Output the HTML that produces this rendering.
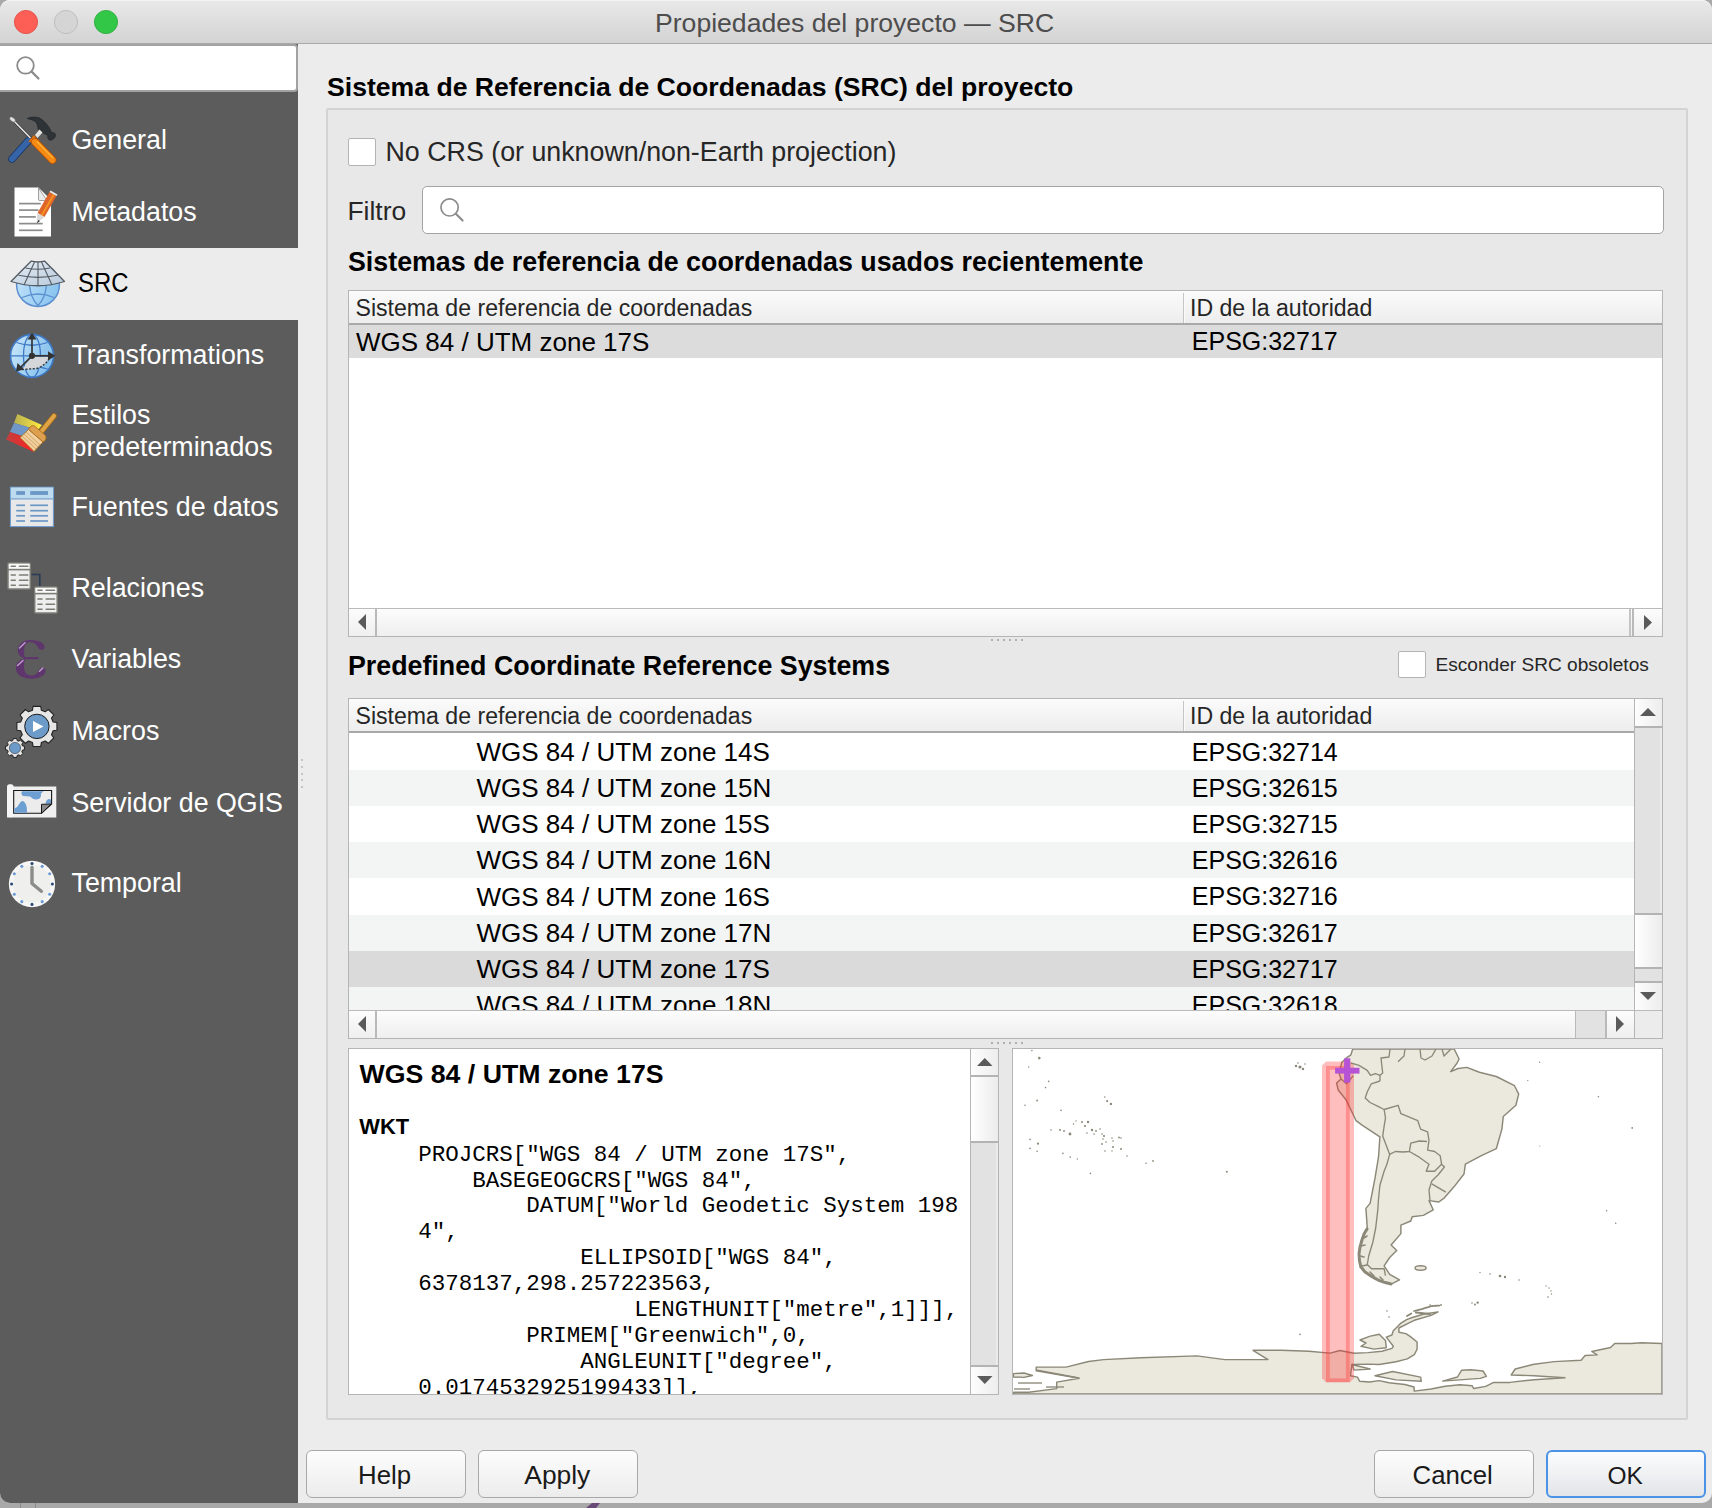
<!DOCTYPE html>
<html><head><meta charset="utf-8">
<style>
html,body{margin:0;padding:0;}
body{width:1712px;height:1508px;position:relative;overflow:hidden;background:#a9a9a9;font-family:'Liberation Sans', sans-serif;}
.t{position:absolute;white-space:pre;}
svg{position:absolute;overflow:visible;}
</style></head><body>
<div style="position:absolute;left:0px;top:0px;width:1712px;height:1503px;background:#ececec;border-radius:10px 10px 10px 10px;overflow:hidden;"></div>
<div style="position:absolute;left:20px;top:1503px;width:1px;height:5px;background:#8a8a8a;"></div>
<div style="position:absolute;left:35px;top:1503px;width:1px;height:5px;background:#8a8a8a;"></div>
<svg style="left:0;top:0" width="1712" height="1508"><path d="M586,1508 L592,1503 L600,1503 L596,1508 Z" fill="#6a4a78"/></svg>
<div style="position:absolute;left:0px;top:44px;width:298px;height:1459px;background:#5c5c5c;border-radius:0 0 0 10px;"></div>
<div style="position:absolute;left:0px;top:0px;width:1712px;height:44px;background:linear-gradient(#e9e9e9,#d3d3d3);border-radius:10px 10px 0 0;box-shadow:inset 0 1px 0 #f4f4f4;"></div>
<div style="position:absolute;left:0px;top:43px;width:1712px;height:1px;background:#a9a9a9;"></div>
<svg style="left:0;top:0" width="140" height="44"><circle cx="26" cy="22" r="11.6" fill="#fd5f57" stroke="#e2463f" stroke-width="0.8"/><circle cx="66" cy="22" r="11.6" fill="#d5d5d5" stroke="#b8b8b8" stroke-width="0.8"/><circle cx="106" cy="22" r="11.6" fill="#33c748" stroke="#27a83a" stroke-width="0.8"/></svg>
<div class="t" style="left:655.0px;top:9.7px;font-size:26.6px;line-height:26.6px;color:#4d4d4d;font-weight:normal;font-family:'Liberation Sans', sans-serif;">Propiedades del proyecto — SRC</div>
<div style="position:absolute;left:-4px;top:44px;width:302px;height:48px;background:#fff;border:2px solid #a2a2a2;border-top-width:2.4px;box-sizing:border-box;border-radius:4px;"></div>
<svg style="left:0;top:45" width="60" height="46"><circle cx="25.5" cy="20.4" r="8.3" fill="none" stroke="#8b8b8b" stroke-width="1.8"/><line x1="31.6" y1="26.6" x2="38.5" y2="33.5" stroke="#8b8b8b" stroke-width="2.2" stroke-linecap="round"/></svg>
<div style="position:absolute;left:0px;top:248px;width:298px;height:72px;background:#ececec;"></div>
<div class="t" style="left:71.5px;top:126.8px;font-size:26.8px;line-height:26.8px;color:#ffffff;font-weight:normal;font-family:'Liberation Sans', sans-serif;">General</div>
<div class="t" style="left:71.5px;top:198.8px;font-size:26.8px;line-height:26.8px;color:#ffffff;font-weight:normal;font-family:'Liberation Sans', sans-serif;">Metadatos</div>
<div class="t" style="left:71.5px;top:342.1px;font-size:26.8px;line-height:26.8px;color:#ffffff;font-weight:normal;font-family:'Liberation Sans', sans-serif;">Transformations</div>
<div class="t" style="left:71.5px;top:402.2px;font-size:26.8px;line-height:26.8px;color:#ffffff;font-weight:normal;font-family:'Liberation Sans', sans-serif;">Estilos</div>
<div class="t" style="left:71.5px;top:434.2px;font-size:26.8px;line-height:26.8px;color:#ffffff;font-weight:normal;font-family:'Liberation Sans', sans-serif;">predeterminados</div>
<div class="t" style="left:71.5px;top:493.8px;font-size:26.8px;line-height:26.8px;color:#ffffff;font-weight:normal;font-family:'Liberation Sans', sans-serif;">Fuentes de datos</div>
<div class="t" style="left:71.5px;top:574.5px;font-size:26.8px;line-height:26.8px;color:#ffffff;font-weight:normal;font-family:'Liberation Sans', sans-serif;">Relaciones</div>
<div class="t" style="left:71.5px;top:646.0px;font-size:26.8px;line-height:26.8px;color:#ffffff;font-weight:normal;font-family:'Liberation Sans', sans-serif;">Variables</div>
<div class="t" style="left:71.5px;top:718.1px;font-size:26.8px;line-height:26.8px;color:#ffffff;font-weight:normal;font-family:'Liberation Sans', sans-serif;">Macros</div>
<div class="t" style="left:71.5px;top:790.1px;font-size:26.8px;line-height:26.8px;color:#ffffff;font-weight:normal;font-family:'Liberation Sans', sans-serif;">Servidor de QGIS</div>
<div class="t" style="left:71.5px;top:870.4px;font-size:26.8px;line-height:26.8px;color:#ffffff;font-weight:normal;font-family:'Liberation Sans', sans-serif;">Temporal</div>
<div class="t" style="left:78.0px;top:269.9px;font-size:26.8px;line-height:26.8px;color:#000000;font-weight:normal;font-family:'Liberation Sans', sans-serif;transform:scaleX(0.89);transform-origin:0 0;">SRC</div>
<svg style="left:0px;top:108px" width="64" height="64" viewBox="0 0 64 64">
<defs><linearGradient id="gBlue" x1="0" y1="0" x2="1" y2="1"><stop offset="0" stop-color="#7aa0d0"/><stop offset="1" stop-color="#1f4a85"/></linearGradient>
<linearGradient id="gOr" x1="0" y1="0" x2="1" y2="0"><stop offset="0" stop-color="#e56a00"/><stop offset="0.5" stop-color="#ffb030"/><stop offset="1" stop-color="#e06000"/></linearGradient></defs>
<path d="M27.2,10.4 C30,9.3 32,9 34,9.1 C37,9.2 39,9.6 40.3,10.6 C42,11.5 43.5,12.8 44.6,14 C46.5,15.8 47.8,17.5 48.8,19.1 C50,21 50.8,23 51.4,24.2 C52.5,24.6 53.5,24.7 54.3,25 C55.3,25.6 55.8,26.4 55.6,27.2 C55.4,28.8 54.8,29.8 53.9,30.6 C52.6,31.8 51.2,32.3 50.1,32.3 C49,32 48.2,31.4 48,30.6 C47.8,29.5 47.6,28.2 47.5,27.2 C45.5,26.2 43.6,25.5 42,24.6 C40.2,23.5 38.9,22.4 38.2,21.2 C37.8,19.8 37.6,18.3 37.4,17 C36.7,15.4 35.8,14 34.8,13.2 C33,12.2 31.3,11.7 29.7,11.2 C28.8,10.9 27.9,10.7 27.2,10.4 Z" fill="#2e3337" stroke="#1e2225" stroke-width="0.6"/>
<path d="M35,27 L39.5,21.5 L42.5,24.5 L37.5,30 Z" fill="#e6e6e0"/>
<line x1="29" y1="32" x2="12" y2="51" stroke="#1a3560" stroke-width="7.6" stroke-linecap="round"/>
<line x1="29" y1="32" x2="12" y2="51" stroke="#3565a8" stroke-width="6" stroke-linecap="round"/>
<line x1="12" y1="11" x2="30.5" y2="30" stroke="#333" stroke-width="2.6"/>
<line x1="12" y1="11" x2="30.5" y2="30" stroke="#e8e8e8" stroke-width="1.6"/>
<ellipse cx="12.5" cy="11.5" rx="3.5" ry="2" transform="rotate(40 12.5 11.5)" fill="#e0e0e0" stroke="#444" stroke-width="0.5"/>
<path d="M28.5,33.5 L34,27.3 L36.5,30.5 L39.5,32.5 L36,37 L33,34.8 Z" fill="#f07a0a" stroke="#b85000" stroke-width="0.5"/>
<line x1="35" y1="34" x2="52.5" y2="52" stroke="#b85000" stroke-width="7.8" stroke-linecap="round"/>
<line x1="35" y1="34" x2="52.5" y2="52" stroke="#f58a14" stroke-width="6.2" stroke-linecap="round"/>
<line x1="37" y1="33.5" x2="53" y2="50" stroke="#ffc040" stroke-width="1.2" opacity="0.8"/>
</svg>
<svg style="left:0px;top:180px" width="64" height="64" viewBox="0 0 64 64">
<path d="M14.5,7.5 L38.5,7.5 L51,20 L51,56.5 L14.5,56.5 Z" fill="#ffffff"/>
<path d="M38.5,8 L38.5,19.5 Q38.5,20.5 39.5,20.5 L47,20.5 Z" fill="#eaeaea" stroke="#666" stroke-width="0.6"/>
<g stroke="#8c8c8c" stroke-width="1.7"><line x1="19" y1="23.6" x2="40.8" y2="23.6"/><line x1="19" y1="30.1" x2="38.5" y2="30.1"/><line x1="19" y1="36.9" x2="35.8" y2="36.9"/><line x1="19" y1="43.6" x2="42.7" y2="43.6"/><line x1="19" y1="50.3" x2="42.7" y2="50.3"/></g>
<path d="M49.5,12 L56.5,16 L44.5,37 L37.5,33 Z" fill="#e0652a"/>
<path d="M53,14 L54.7,15 L42.5,36 L40.8,35 Z" fill="#f39420"/>
<path d="M49.5,12 L56.5,16 L57.5,14.5 L50.5,10.5 Z" fill="#e8e8e8"/>
<path d="M37.5,33 L44.5,37 L36.5,43.5 Z" fill="#d8d8d8"/>
<path d="M38.5,40 L40,41 L36.5,43.5 Z" fill="#333"/>
</svg>
<svg style="left:0px;top:252px" width="72" height="64" viewBox="0 0 72 64">
<defs><linearGradient id="gGl" x1="0" y1="0" x2="1" y2="0.3"><stop offset="0" stop-color="#c4e4fb"/><stop offset="1" stop-color="#8cc6f0"/></linearGradient>
<linearGradient id="gFan" x1="0" y1="0" x2="1" y2="1"><stop offset="0" stop-color="#e4ecf4"/><stop offset="1" stop-color="#b8cadc"/></linearGradient></defs>
<circle cx="38" cy="33" r="21.4" fill="url(#gGl)" stroke="#5b8fd0" stroke-width="1.5"/>
<path d="M29.5,33 Q30.5,46 38,53.5 Q45.5,46 46.5,33" fill="none" stroke="#5b8fd0" stroke-width="1.3"/>
<path d="M22,45.5 Q38,38.5 54,45.5" fill="none" stroke="#5b8fd0" stroke-width="1.3"/>
<path d="M31,9.2 Q38,10.8 44.8,9.2 L64.5,29.5 Q38,38 11,29.5 Z" fill="url(#gFan)" stroke="#555b62" stroke-width="1.3" stroke-linejoin="round"/>
<g fill="none" stroke="#555b62" stroke-width="1.1">
<path d="M25.5,16 Q38,18.5 50,16"/><path d="M18.5,23.2 Q38,27.5 57.5,23.2"/>
<path d="M34.5,10 L24,33"/><path d="M41.5,10 L52,33"/><path d="M38,10.3 L38,34"/>
</g>
</svg>
<svg style="left:0px;top:324px" width="64" height="64" viewBox="0 0 64 64">
<defs><linearGradient id="gGl2" x1="0" y1="0" x2="1" y2="0.4"><stop offset="0" stop-color="#cde9fb"/><stop offset="1" stop-color="#84c0ec"/></linearGradient></defs>
<circle cx="32" cy="31.8" r="21.5" fill="url(#gGl2)" stroke="#3f78c4" stroke-width="1.7"/>
<g fill="none" stroke="#3f78c4" stroke-width="1.3">
<line x1="10.5" y1="31.8" x2="53.5" y2="31.8"/>
<ellipse cx="32" cy="31.8" rx="8.5" ry="21.5"/>
<path d="M16.5,18.5 Q32,24 47.5,18.5"/><path d="M16.5,45 Q32,39.5 47.5,45"/>
</g>
<path d="M32,33 L49.5,33 Q45,42 37,44.5 L22,45.5 Z" fill="#d4d6da"/>
<path d="M22,45.5 L37,44.5 Q46,41 49.5,34" fill="none" stroke="#333" stroke-width="1.4" stroke-dasharray="2,1.6"/>
<g stroke="#333" stroke-width="1.7" fill="#333">
<line x1="32" y1="31.8" x2="32" y2="12"/><line x1="32" y1="31.8" x2="52" y2="31.8"/><line x1="32" y1="31.8" x2="19" y2="45"/>
</g>
<g fill="#333">
<path d="M32,8.8 L27.5,15.5 L36.5,15.5 Z"/><path d="M55.3,31.8 L48,27.2 L48,36.4 Z"/><path d="M16,47.5 L17.5,39 L24,45.5 Z"/>
<circle cx="32" cy="31.8" r="3.1"/>
</g>
</svg>
<svg style="left:0px;top:400px" width="64" height="64" viewBox="0 0 64 64">
<defs><linearGradient id="gY" x1="0" y1="0" x2="1" y2="0"><stop offset="0" stop-color="#b8b050"/><stop offset="1" stop-color="#ffec40"/></linearGradient>
<linearGradient id="gR" x1="0" y1="0" x2="1" y2="0"><stop offset="0" stop-color="#c04040"/><stop offset="1" stop-color="#ff2020"/></linearGradient></defs>
<path d="M17.4,14 L42,25 L38,30 L14,23 Z" fill="url(#gY)"/>
<path d="M14,23 L38,30 L28,38 L10,32 Z" fill="#6f98c8"/>
<path d="M10,32 L28,38 L34,52 L6,39.5 Z" fill="url(#gR)"/>
<line x1="41" y1="32" x2="54" y2="16" stroke="#a86a10" stroke-width="5.6" stroke-linecap="round"/>
<line x1="41" y1="32" x2="54" y2="16" stroke="#e0a448" stroke-width="4.1" stroke-linecap="round"/>
<path d="M30,27 Q32,24.5 34.5,26 L45.5,35.5 Q47,38 45,40.5 L43,42 L28.5,29.5 Z" fill="#dca050" stroke="#a86a10" stroke-width="0.8"/>
<path d="M20,37.5 L28.5,29.5 L43,42 L34,51.5 Z" fill="#f0d0a0" stroke="#a86a10" stroke-width="0.8"/>
<g stroke="#c89048" stroke-width="0.7"><line x1="22" y1="36" x2="36" y2="49"/><line x1="24" y1="34" x2="38" y2="47"/><line x1="26" y1="32" x2="40" y2="45"/></g>
</svg>
<svg style="left:0px;top:476px" width="64" height="64" viewBox="0 0 64 64">
<rect x="10.4" y="11.2" width="43" height="39.4" fill="#e8e8e8" stroke="#6d9bd2" stroke-width="1"/>
<rect x="10.9" y="11.7" width="42" height="11" fill="#bddcf0"/>
<line x1="10.4" y1="22.9" x2="53.4" y2="22.9" stroke="#7aa4d0" stroke-width="1.3"/>
<g fill="#6b97c6"><rect x="16.2" y="15.1" width="8.8" height="3.8"/><rect x="30.2" y="15.1" width="17.8" height="3.8"/></g>
<g stroke="#6b97c6" stroke-width="1.7"><line x1="16.2" y1="29.3" x2="25" y2="29.3"/><line x1="30.2" y1="29.3" x2="48" y2="29.3"/>
<line x1="16.2" y1="34.7" x2="25" y2="34.7"/><line x1="30.2" y1="34.7" x2="48" y2="34.7"/>
<line x1="16.2" y1="39.8" x2="25" y2="39.8"/><line x1="30.2" y1="39.8" x2="48" y2="39.8"/>
<line x1="16.2" y1="45" x2="25" y2="45"/><line x1="30.2" y1="45" x2="48" y2="45"/></g>
</svg>
<svg style="left:0px;top:556px" width="64" height="64" viewBox="0 0 64 64"><rect x="8" y="7" width="22.3" height="26" rx="1" fill="#eeeeee" stroke="#7d7d75" stroke-width="1.5"/><rect x="8.8" y="7.8" width="20.7" height="5.2" fill="#fafafa"/><line x1="8" y1="13.6" x2="30.3" y2="13.6" stroke="#7d7d75" stroke-width="1.6"/><g stroke="#7d7d75" stroke-width="1.6" stroke-linecap="round"><line x1="11.3" y1="10.2" x2="15.3" y2="10.2"/><line x1="19.5" y1="10.2" x2="27.8" y2="10.2"/><line x1="11.3" y1="19" x2="15.3" y2="19"/><line x1="19.5" y1="19" x2="27.8" y2="19"/><line x1="11.3" y1="24.2" x2="15.3" y2="24.2"/><line x1="19.5" y1="24.2" x2="27.8" y2="24.2"/><line x1="11.3" y1="29.3" x2="15.3" y2="29.3"/><line x1="19.5" y1="29.3" x2="27.8" y2="29.3"/></g><rect x="34.7" y="31" width="22.5" height="26" rx="1" fill="#eeeeee" stroke="#7d7d75" stroke-width="1.5"/><rect x="35.5" y="31.8" width="20.9" height="5.2" fill="#fafafa"/><line x1="34.7" y1="37.6" x2="57.2" y2="37.6" stroke="#7d7d75" stroke-width="1.6"/><g stroke="#7d7d75" stroke-width="1.6" stroke-linecap="round"><line x1="38.0" y1="34.2" x2="42.0" y2="34.2"/><line x1="46.2" y1="34.2" x2="54.5" y2="34.2"/><line x1="38.0" y1="43" x2="42.0" y2="43"/><line x1="46.2" y1="43" x2="54.5" y2="43"/><line x1="38.0" y1="48.2" x2="42.0" y2="48.2"/><line x1="46.2" y1="48.2" x2="54.5" y2="48.2"/><line x1="38.0" y1="53.3" x2="42.0" y2="53.3"/><line x1="46.2" y1="53.3" x2="54.5" y2="53.3"/></g><path d="M31.5,18.5 L39.8,18.5 L39.8,30" fill="none" stroke="#263b56" stroke-width="1.6"/></svg>
<svg style="left:0px;top:628px" width="64" height="64" viewBox="0 0 64 64">
<g fill="#5f356d">
<path d="M44.5,19 C44.5,16 41,12 31,12 C22,12 17.8,17 17.8,22.5 C17.8,26.5 20.5,29 24,30 L25,29.3 C23.5,27.5 24.3,24 24.3,21 C24.3,17 27,14.3 30.5,14.3 C34,14.3 36,16 37.5,18.5 C38.5,20.5 39.5,21.8 41.5,21.8 C43.3,21.8 44.5,20.5 44.5,19 Z"/>
<path d="M24,29.1 L38,29 Q39.8,30 38,31.2 L24,31.3 Z"/>
<path d="M24.5,30.5 C19.5,31.5 15.8,35 15.8,40 C15.8,46.5 22,50.7 32,50.7 C39.5,50.7 45.5,47 45.5,43 C45.5,41 44,39.5 42.5,39.5 C40.5,39.5 39.5,41 38.5,43 C37,46 34.5,47.5 31.5,47.5 C26.5,47.5 24,43.5 24,39.5 C24,35.5 24.5,33 25,31.5 Z"/>
</g>
<g stroke="#c8a8d8" stroke-width="1.5" stroke-linecap="round" opacity="0.9"><line x1="19.5" y1="20" x2="25" y2="14.8"/><line x1="17.5" y1="37.5" x2="23" y2="32.5"/><line x1="39.5" y1="43.3" x2="42.8" y2="40"/></g>
</svg>
<svg style="left:0px;top:700px" width="64" height="64" viewBox="0 0 64 64">
<path d="M32.48,10.19 L33.05,6.37 L40.75,6.37 L41.32,10.19 L45.24,11.82 L48.34,9.51 L53.79,14.96 L51.48,18.06 L53.11,21.98 L56.93,22.55 L56.93,30.25 L53.11,30.82 L51.48,34.74 L53.79,37.84 L48.34,43.29 L45.24,40.98 L41.32,42.61 L40.75,46.43 L33.05,46.43 L32.48,42.61 L28.56,40.98 L25.46,43.29 L20.01,37.84 L22.32,34.74 L20.69,30.82 L16.87,30.25 L16.87,22.55 L20.69,21.98 L22.32,18.06 L20.01,14.96 L25.46,9.51 L28.56,11.82 Z" fill="#e6e6e6" stroke="#222" stroke-width="1.1" stroke-linejoin="round"/>
<circle cx="36.9" cy="26.4" r="12.2" fill="#6c9bc9" stroke="#1a1a1a" stroke-width="1"/>
<path d="M33,21 L43.5,26.5 L33,32 Z" fill="#fff"/>
<path d="M12.95,40.47 L13.19,38.57 L16.81,38.57 L17.05,40.47 L18.87,41.23 L20.38,40.05 L22.95,42.62 L21.77,44.13 L22.53,45.95 L24.43,46.19 L24.43,49.81 L22.53,50.05 L21.77,51.87 L22.95,53.38 L20.38,55.95 L18.87,54.77 L17.05,55.53 L16.81,57.43 L13.19,57.43 L12.95,55.53 L11.13,54.77 L9.62,55.95 L7.05,53.38 L8.23,51.87 L7.47,50.05 L5.57,49.81 L5.57,46.19 L7.47,45.95 L8.23,44.13 L7.05,42.62 L9.62,40.05 L11.13,41.23 Z" fill="#e6e6e6" stroke="#222" stroke-width="1" stroke-linejoin="round"/>
<circle cx="15" cy="48" r="5.6" fill="#6c9bc9" stroke="#333" stroke-width="0.6"/>
</svg>
<svg style="left:0px;top:772px" width="64" height="64" viewBox="0 0 64 64">
<rect x="7" y="14.5" width="49.3" height="31" fill="#efefef"/>
<rect x="7" y="12.2" width="6.6" height="33" rx="2.5" fill="#f4f4f4"/>
<path d="M13.7,18.5 L51.6,18.5 L51.6,32 L41.5,41.3 L13.7,41.3 Z" fill="#ececec" stroke="#151515" stroke-width="1.1"/>
<g fill="#6e9fd3">
<path d="M22,19.2 L44,19.2 Q40,21 41,24 Q40,27.5 36,27.5 Q32,27 30,24.5 Q26,24 23,24 Q20.5,22 22,19.2 Z"/>
<path d="M14.3,36.5 Q18,35 19.5,31.5 Q21,28.5 23,29 Q26,30.5 26.8,36 L27,40.7 L14.3,40.7 Z"/>
<path d="M45.5,31.5 Q46,27.5 49,27 L51,27.5 L51,31.5 Z"/>
</g>
<path d="M41.5,32.3 L51.2,32 L41.5,41.3 Z" fill="#8a8a8a" stroke="#151515" stroke-width="1"/>
</svg>
<svg style="left:0px;top:852px" width="64" height="64" viewBox="0 0 64 64"><circle cx="32" cy="32" r="23.5" fill="#3e3e3e" opacity="0.35"/><circle cx="32" cy="32" r="23.2" fill="#f6f6f5"/><circle cx="32" cy="32" r="19" fill="#efefed"/><circle cx="32.00" cy="11.60" r="1.55" fill="#2b4b78"/><circle cx="42.20" cy="14.33" r="1.55" fill="#6b9bd2"/><circle cx="49.67" cy="21.80" r="1.55" fill="#6b9bd2"/><circle cx="52.40" cy="32.00" r="1.55" fill="#2b4b78"/><circle cx="49.67" cy="42.20" r="1.55" fill="#6b9bd2"/><circle cx="42.20" cy="49.67" r="1.55" fill="#6b9bd2"/><circle cx="32.00" cy="52.40" r="1.55" fill="#2b4b78"/><circle cx="21.80" cy="49.67" r="1.55" fill="#6b9bd2"/><circle cx="14.33" cy="42.20" r="1.55" fill="#6b9bd2"/><circle cx="11.60" cy="32.00" r="1.55" fill="#2b4b78"/><circle cx="14.33" cy="21.80" r="1.55" fill="#6b9bd2"/><circle cx="21.80" cy="14.33" r="1.55" fill="#6b9bd2"/><path d="M32,15.5 L32,31.5 L41.3,39.3" fill="none" stroke="#8b8d89" stroke-width="3.4" stroke-linecap="round" stroke-linejoin="round"/></svg>
<div style="position:absolute;left:301px;top:759.0px;width:2px;height:2px;background:#c4c4c4;"></div>
<div style="position:absolute;left:301px;top:765.8px;width:2px;height:2px;background:#c4c4c4;"></div>
<div style="position:absolute;left:301px;top:772.6px;width:2px;height:2px;background:#c4c4c4;"></div>
<div style="position:absolute;left:301px;top:779.4px;width:2px;height:2px;background:#c4c4c4;"></div>
<div style="position:absolute;left:301px;top:786.2px;width:2px;height:2px;background:#c4c4c4;"></div>
<div class="t" style="left:327.0px;top:74.4px;font-size:26.6px;line-height:26.6px;color:#000;font-weight:bold;font-family:'Liberation Sans', sans-serif;">Sistema de Referencia de Coordenadas (SRC) del proyecto</div>
<div style="position:absolute;left:326px;top:108px;width:1362px;height:1312px;background:#e8e8e8;border:2px solid #d3d3d3;box-sizing:border-box;border-radius:2px;"></div>
<div style="position:absolute;left:348px;top:138px;width:28px;height:28px;background:#fff;border:1.5px solid #b4b4b4;box-sizing:border-box;border-radius:2px;"></div>
<div class="t" style="left:385.5px;top:139.4px;font-size:26.8px;line-height:26.8px;color:#262626;font-weight:normal;font-family:'Liberation Sans', sans-serif;">No CRS (or unknown/non-Earth projection)</div>
<div class="t" style="left:347.5px;top:197.7px;font-size:26.4px;line-height:26.4px;color:#262626;font-weight:normal;font-family:'Liberation Sans', sans-serif;">Filtro</div>
<div style="position:absolute;left:422px;top:186px;width:1242px;height:48px;background:#fff;border:1.5px solid #a3a3a3;box-sizing:border-box;border-radius:5px;"></div>
<svg style="left:422px;top:186px" width="60" height="48"><circle cx="27.6" cy="21.4" r="8.6" fill="none" stroke="#8b8b8b" stroke-width="1.7"/><line x1="33.8" y1="27.8" x2="40.6" y2="34.6" stroke="#8b8b8b" stroke-width="2.1" stroke-linecap="round"/></svg>
<div class="t" style="left:348.0px;top:248.7px;font-size:26.8px;line-height:26.8px;color:#000;font-weight:bold;font-family:'Liberation Sans', sans-serif;">Sistemas de referencia de coordenadas usados recientemente</div>
<div style="position:absolute;left:348px;top:290px;width:1315px;height:347px;background:#fff;border:1px solid #b5b5b5;box-sizing:border-box;"></div>
<div style="position:absolute;left:349px;top:291px;width:1313px;height:32px;background:linear-gradient(#fbfbfb,#ededed);"></div>
<div style="position:absolute;left:349px;top:323px;width:1313px;height:2px;background:#a9a9a9;"></div>
<div style="position:absolute;left:1183px;top:293px;width:1px;height:30px;background:#c6c6c6;"></div>
<div style="position:absolute;left:1184px;top:293px;width:1px;height:30px;background:#fafafa;"></div>
<div style="position:absolute;left:349px;top:325px;width:1313px;height:33px;background:#dcdcdc;"></div>
<div class="t" style="left:355.5px;top:297.2px;font-size:23.1px;line-height:23.1px;color:#262626;font-weight:normal;font-family:'Liberation Sans', sans-serif;">Sistema de referencia de coordenadas</div>
<div class="t" style="left:1190.0px;top:297.2px;font-size:23.1px;line-height:23.1px;color:#262626;font-weight:normal;font-family:'Liberation Sans', sans-serif;">ID de la autoridad</div>
<div class="t" style="left:356.0px;top:328.8px;font-size:26.0px;line-height:26.0px;color:#000;font-weight:normal;font-family:'Liberation Sans', sans-serif;">WGS 84 / UTM zone 17S</div>
<div class="t" style="left:1191.8px;top:329.3px;font-size:25.0px;line-height:25.0px;color:#000;font-weight:normal;font-family:'Liberation Sans', sans-serif;">EPSG:32717</div>
<div style="position:absolute;left:349px;top:608px;width:1313px;height:1px;background:#bababa;"></div>
<div style="position:absolute;left:349px;top:609px;width:1313px;height:27px;background:linear-gradient(#fcfcfc,#efefef);"></div>
<div style="position:absolute;left:375px;top:609px;width:2px;height:27px;background:#b9b9b9;"></div>
<svg style="left:358px;top:614px" width="8" height="16"><path d="M8,0 L0,8.0 L8,16 Z" fill="#5a5a5a"/></svg>
<div style="position:absolute;left:1629px;top:609px;width:2px;height:27px;background:#c4c4c4;"></div>
<div style="position:absolute;left:1632px;top:609px;width:2px;height:27px;background:#b9b9b9;"></div>
<svg style="left:1644px;top:614.5px" width="8" height="15"><path d="M0,0 L8,7.5 L0,15 Z" fill="#5a5a5a"/></svg>
<svg style="left:991px;top:639px" width="40" height="4"><rect x="0" y="0" width="2" height="2" fill="#b0b0b0"/><rect x="6" y="0" width="2" height="2" fill="#b0b0b0"/><rect x="12" y="0" width="2" height="2" fill="#b0b0b0"/><rect x="18" y="0" width="2" height="2" fill="#b0b0b0"/><rect x="24" y="0" width="2" height="2" fill="#b0b0b0"/><rect x="30" y="0" width="2" height="2" fill="#b0b0b0"/></svg>
<div class="t" style="left:348.0px;top:653.0px;font-size:26.8px;line-height:26.8px;color:#000;font-weight:bold;font-family:'Liberation Sans', sans-serif;">Predefined Coordinate Reference Systems</div>
<div style="position:absolute;left:1398px;top:651px;width:28px;height:27px;background:#fff;border:1.5px solid #b4b4b4;box-sizing:border-box;border-radius:2px;"></div>
<div class="t" style="left:1435.5px;top:655.3px;font-size:19.1px;line-height:19.1px;color:#262626;font-weight:normal;font-family:'Liberation Sans', sans-serif;">Esconder SRC obsoletos</div>
<div style="position:absolute;left:348px;top:698px;width:1315px;height:341px;background:#fff;border:1px solid #b5b5b5;box-sizing:border-box;"></div>
<div style="position:absolute;left:349px;top:699px;width:1285px;height:32px;background:linear-gradient(#fbfbfb,#ededed);"></div>
<div style="position:absolute;left:349px;top:731px;width:1285px;height:2px;background:#a9a9a9;"></div>
<div style="position:absolute;left:1183px;top:701px;width:1px;height:30px;background:#c6c6c6;"></div>
<div style="position:absolute;left:1184px;top:701px;width:1px;height:30px;background:#fafafa;"></div>
<div class="t" style="left:355.5px;top:705.2px;font-size:23.1px;line-height:23.1px;color:#262626;font-weight:normal;font-family:'Liberation Sans', sans-serif;">Sistema de referencia de coordenadas</div>
<div class="t" style="left:1190.0px;top:705.2px;font-size:23.1px;line-height:23.1px;color:#262626;font-weight:normal;font-family:'Liberation Sans', sans-serif;">ID de la autoridad</div>
<div style="position:absolute;left:349px;top:733.6px;width:1285px;height:276.4px;overflow:hidden;"><div style="position:absolute;left:0;top:0.0px;width:1285px;height:36.7px;background:#ffffff;"></div><div class="t" style="left:127.5px;top:5.2px;font-size:26.0px;line-height:26.0px;color:#000;font-weight:normal;font-family:'Liberation Sans', sans-serif;">WGS 84 / UTM zone 14S</div>
<div class="t" style="left:842.8px;top:6.0px;font-size:25.0px;line-height:25.0px;color:#000;font-weight:normal;font-family:'Liberation Sans', sans-serif;">EPSG:32714</div>
<div style="position:absolute;left:0;top:36.2px;width:1285px;height:36.7px;background:#f3f4f4;"></div><div class="t" style="left:127.5px;top:41.4px;font-size:26.0px;line-height:26.0px;color:#000;font-weight:normal;font-family:'Liberation Sans', sans-serif;">WGS 84 / UTM zone 15N</div>
<div class="t" style="left:842.8px;top:42.2px;font-size:25.0px;line-height:25.0px;color:#000;font-weight:normal;font-family:'Liberation Sans', sans-serif;">EPSG:32615</div>
<div style="position:absolute;left:0;top:72.4px;width:1285px;height:36.7px;background:#ffffff;"></div><div class="t" style="left:127.5px;top:77.6px;font-size:26.0px;line-height:26.0px;color:#000;font-weight:normal;font-family:'Liberation Sans', sans-serif;">WGS 84 / UTM zone 15S</div>
<div class="t" style="left:842.8px;top:78.4px;font-size:25.0px;line-height:25.0px;color:#000;font-weight:normal;font-family:'Liberation Sans', sans-serif;">EPSG:32715</div>
<div style="position:absolute;left:0;top:108.6px;width:1285px;height:36.7px;background:#f3f4f4;"></div><div class="t" style="left:127.5px;top:113.8px;font-size:26.0px;line-height:26.0px;color:#000;font-weight:normal;font-family:'Liberation Sans', sans-serif;">WGS 84 / UTM zone 16N</div>
<div class="t" style="left:842.8px;top:114.6px;font-size:25.0px;line-height:25.0px;color:#000;font-weight:normal;font-family:'Liberation Sans', sans-serif;">EPSG:32616</div>
<div style="position:absolute;left:0;top:144.8px;width:1285px;height:36.7px;background:#ffffff;"></div><div class="t" style="left:127.5px;top:150.0px;font-size:26.0px;line-height:26.0px;color:#000;font-weight:normal;font-family:'Liberation Sans', sans-serif;">WGS 84 / UTM zone 16S</div>
<div class="t" style="left:842.8px;top:150.8px;font-size:25.0px;line-height:25.0px;color:#000;font-weight:normal;font-family:'Liberation Sans', sans-serif;">EPSG:32716</div>
<div style="position:absolute;left:0;top:181.0px;width:1285px;height:36.7px;background:#f3f4f4;"></div><div class="t" style="left:127.5px;top:186.2px;font-size:26.0px;line-height:26.0px;color:#000;font-weight:normal;font-family:'Liberation Sans', sans-serif;">WGS 84 / UTM zone 17N</div>
<div class="t" style="left:842.8px;top:187.0px;font-size:25.0px;line-height:25.0px;color:#000;font-weight:normal;font-family:'Liberation Sans', sans-serif;">EPSG:32617</div>
<div style="position:absolute;left:0;top:217.2px;width:1285px;height:36.7px;background:#dadada;"></div><div class="t" style="left:127.5px;top:222.4px;font-size:26.0px;line-height:26.0px;color:#000;font-weight:normal;font-family:'Liberation Sans', sans-serif;">WGS 84 / UTM zone 17S</div>
<div class="t" style="left:842.8px;top:223.2px;font-size:25.0px;line-height:25.0px;color:#000;font-weight:normal;font-family:'Liberation Sans', sans-serif;">EPSG:32717</div>
<div style="position:absolute;left:0;top:253.4px;width:1285px;height:36.7px;background:#f3f4f4;"></div><div class="t" style="left:127.5px;top:258.6px;font-size:26.0px;line-height:26.0px;color:#000;font-weight:normal;font-family:'Liberation Sans', sans-serif;">WGS 84 / UTM zone 18N</div>
<div class="t" style="left:842.8px;top:259.4px;font-size:25.0px;line-height:25.0px;color:#000;font-weight:normal;font-family:'Liberation Sans', sans-serif;">EPSG:32618</div>
</div>
<div style="position:absolute;left:1634px;top:699px;width:1px;height:311px;background:#b5b5b5;"></div>
<div style="position:absolute;left:1635px;top:699px;width:27px;height:27px;background:linear-gradient(90deg,#fdfdfd,#ededed);"></div>
<svg style="left:1640px;top:708px" width="16" height="8"><path d="M0,8 L8.0,0 L16,8 Z" fill="#5a5a5a"/></svg>
<div style="position:absolute;left:1635px;top:726px;width:27px;height:2px;background:#b3b3b3;"></div>
<div style="position:absolute;left:1635px;top:728px;width:27px;height:186px;background:#e2e2e2;box-shadow:inset -2px 0 0 #ebebeb;"></div>
<div style="position:absolute;left:1635px;top:913px;width:27px;height:2px;background:#b3b3b3;"></div>
<div style="position:absolute;left:1635px;top:915px;width:27px;height:53px;background:linear-gradient(90deg,#ffffff,#ececec);"></div>
<div style="position:absolute;left:1635px;top:967px;width:27px;height:2px;background:#b3b3b3;"></div>
<div style="position:absolute;left:1635px;top:969px;width:27px;height:13px;background:#e2e2e2;"></div>
<div style="position:absolute;left:1635px;top:981px;width:27px;height:2px;background:#b3b3b3;"></div>
<div style="position:absolute;left:1635px;top:983px;width:27px;height:27px;background:linear-gradient(90deg,#fdfdfd,#ededed);"></div>
<svg style="left:1640px;top:992px" width="16" height="8"><path d="M0,0 L8.0,8 L16,0 Z" fill="#5a5a5a"/></svg>
<div style="position:absolute;left:349px;top:1010px;width:1313px;height:1px;background:#bababa;"></div>
<div style="position:absolute;left:349px;top:1011px;width:1285px;height:27px;background:linear-gradient(#fcfcfc,#efefef);"></div>
<div style="position:absolute;left:375px;top:1011px;width:2px;height:27px;background:#b9b9b9;"></div>
<svg style="left:358px;top:1016px" width="8" height="16"><path d="M8,0 L0,8.0 L8,16 Z" fill="#5a5a5a"/></svg>
<div style="position:absolute;left:1575px;top:1011px;width:31px;height:27px;background:#e2e2e2;"></div>
<div style="position:absolute;left:1575px;top:1011px;width:1px;height:27px;background:#b9b9b9;"></div>
<div style="position:absolute;left:1605px;top:1011px;width:2px;height:27px;background:#b9b9b9;"></div>
<div style="position:absolute;left:1607px;top:1011px;width:27px;height:27px;background:linear-gradient(#fcfcfc,#efefef);"></div>
<svg style="left:1616px;top:1016px" width="8" height="16"><path d="M0,0 L8,8.0 L0,16 Z" fill="#5a5a5a"/></svg>
<div style="position:absolute;left:1634px;top:1010px;width:1px;height:28px;background:#b5b5b5;"></div>
<div style="position:absolute;left:1635px;top:1011px;width:27px;height:27px;background:#ececec;"></div>
<svg style="left:991px;top:1042px" width="40" height="4"><rect x="0" y="0" width="2" height="2" fill="#b0b0b0"/><rect x="6" y="0" width="2" height="2" fill="#b0b0b0"/><rect x="12" y="0" width="2" height="2" fill="#b0b0b0"/><rect x="18" y="0" width="2" height="2" fill="#b0b0b0"/><rect x="24" y="0" width="2" height="2" fill="#b0b0b0"/><rect x="30" y="0" width="2" height="2" fill="#b0b0b0"/></svg>
<div style="position:absolute;left:348px;top:1048px;width:651px;height:347px;background:#fff;border:1px solid #b5b5b5;box-sizing:border-box;"></div>
<div style="position:absolute;left:349px;top:1049px;width:621px;height:345px;overflow:hidden;"><div class="t" style="left:10.6px;top:11.6px;font-size:26.7px;line-height:26.7px;color:#000;font-weight:bold;font-family:'Liberation Sans', sans-serif;">WGS 84 / UTM zone 17S</div>
<div class="t" style="left:10.3px;top:66.9px;font-size:21.9px;line-height:21.9px;color:#000;font-weight:bold;font-family:'Liberation Sans', sans-serif;">WKT</div>
<div class="t" style="left:69.2px;top:94.6px;font-size:22.5px;line-height:22.5px;color:#000;font-weight:normal;font-family:'Liberation Mono', monospace;">PROJCRS[&quot;WGS 84 / UTM zone 17S&quot;,</div>
<div class="t" style="left:123.2px;top:120.5px;font-size:22.5px;line-height:22.5px;color:#000;font-weight:normal;font-family:'Liberation Mono', monospace;">BASEGEOGCRS[&quot;WGS 84&quot;,</div>
<div class="t" style="left:177.2px;top:146.4px;font-size:22.5px;line-height:22.5px;color:#000;font-weight:normal;font-family:'Liberation Mono', monospace;">DATUM[&quot;World Geodetic System 198</div>
<div class="t" style="left:69.2px;top:172.3px;font-size:22.5px;line-height:22.5px;color:#000;font-weight:normal;font-family:'Liberation Mono', monospace;">4&quot;,</div>
<div class="t" style="left:231.2px;top:198.2px;font-size:22.5px;line-height:22.5px;color:#000;font-weight:normal;font-family:'Liberation Mono', monospace;">ELLIPSOID[&quot;WGS 84&quot;,</div>
<div class="t" style="left:69.2px;top:224.1px;font-size:22.5px;line-height:22.5px;color:#000;font-weight:normal;font-family:'Liberation Mono', monospace;">6378137,298.257223563,</div>
<div class="t" style="left:285.2px;top:250.0px;font-size:22.5px;line-height:22.5px;color:#000;font-weight:normal;font-family:'Liberation Mono', monospace;">LENGTHUNIT[&quot;metre&quot;,1]]],</div>
<div class="t" style="left:177.2px;top:275.9px;font-size:22.5px;line-height:22.5px;color:#000;font-weight:normal;font-family:'Liberation Mono', monospace;">PRIMEM[&quot;Greenwich&quot;,0,</div>
<div class="t" style="left:231.2px;top:301.8px;font-size:22.5px;line-height:22.5px;color:#000;font-weight:normal;font-family:'Liberation Mono', monospace;">ANGLEUNIT[&quot;degree&quot;,</div>
<div class="t" style="left:69.2px;top:327.7px;font-size:22.5px;line-height:22.5px;color:#000;font-weight:normal;font-family:'Liberation Mono', monospace;">0.0174532925199433]],</div>
</div>
<div style="position:absolute;left:970px;top:1049px;width:1px;height:345px;background:#b5b5b5;"></div>
<div style="position:absolute;left:971px;top:1049px;width:27px;height:27px;background:linear-gradient(90deg,#fdfdfd,#ededed);"></div>
<svg style="left:976.5px;top:1058px" width="15.5" height="8"><path d="M0,8 L7.75,0 L15.5,8 Z" fill="#5a5a5a"/></svg>
<div style="position:absolute;left:971px;top:1075px;width:27px;height:2px;background:#b3b3b3;"></div>
<div style="position:absolute;left:971px;top:1077px;width:27px;height:64px;background:linear-gradient(90deg,#ffffff,#ececec);"></div>
<div style="position:absolute;left:971px;top:1141px;width:27px;height:2px;background:#b3b3b3;"></div>
<div style="position:absolute;left:971px;top:1143px;width:27px;height:222px;background:#e2e2e2;box-shadow:inset -2px 0 0 #ebebeb;"></div>
<div style="position:absolute;left:971px;top:1365px;width:27px;height:2px;background:#b3b3b3;"></div>
<div style="position:absolute;left:971px;top:1367px;width:27px;height:27px;background:linear-gradient(90deg,#fdfdfd,#ededed);"></div>
<svg style="left:976.5px;top:1376px" width="15.5" height="8"><path d="M0,0 L7.75,8 L15.5,0 Z" fill="#5a5a5a"/></svg>
<div style="position:absolute;left:1012px;top:1048px;width:651px;height:347px;background:#fff;border:1px solid #b5b5b5;box-sizing:border-box;"></div>
<div style="position:absolute;left:306px;top:1450px;width:160px;height:48px;background:linear-gradient(#fdfdfd,#ececec);border:1.5px solid #a8a8a8;box-sizing:border-box;border-radius:6px;"></div>
<div class="t" style="left:358.0px;top:1462.7px;font-size:25.8px;line-height:25.8px;color:#1a1a1a;font-weight:normal;font-family:'Liberation Sans', sans-serif;">Help</div>
<div style="position:absolute;left:478px;top:1450px;width:160px;height:48px;background:linear-gradient(#fdfdfd,#ececec);border:1.5px solid #a8a8a8;box-sizing:border-box;border-radius:6px;"></div>
<div class="t" style="left:524.3px;top:1462.2px;font-size:26.4px;line-height:26.4px;color:#1a1a1a;font-weight:normal;font-family:'Liberation Sans', sans-serif;">Apply</div>
<div style="position:absolute;left:1374px;top:1450px;width:160px;height:48px;background:linear-gradient(#fdfdfd,#ececec);border:1.5px solid #a8a8a8;box-sizing:border-box;border-radius:6px;"></div>
<div class="t" style="left:1412.5px;top:1462.7px;font-size:25.8px;line-height:25.8px;color:#1a1a1a;font-weight:normal;font-family:'Liberation Sans', sans-serif;">Cancel</div>
<div style="position:absolute;left:1546px;top:1450px;width:160px;height:48px;background:linear-gradient(#fbfcfd,#e2e5e9);border:2px solid #4b93e6;box-sizing:border-box;border-radius:6px;"></div>
<div class="t" style="left:1607.5px;top:1463.8px;font-size:24.5px;line-height:24.5px;color:#1a1a1a;font-weight:normal;font-family:'Liberation Sans', sans-serif;">OK</div>
<svg style="left:0;top:0" width="1712" height="1508" viewBox="0 0 1712 1508"><defs><clipPath id="mc"><rect x="1013" y="1049" width="649" height="345"/></clipPath></defs><g clip-path="url(#mc)"><g fill="#ebe8de" stroke="#8c8878" stroke-width="1.45" stroke-linejoin="round"><path d="M1352.7,1049 L1454.2,1049 L1459.1,1059 L1457,1063.2 L1450.7,1071.6 L1458,1068.5 L1466.8,1067.4 L1479.4,1072.3 L1496.3,1076.5 L1514.5,1085.7 L1518.7,1094.1 L1515.9,1105.3 L1503.3,1116.5 L1501.9,1129.1 L1496.3,1148.7 L1480.9,1155.8 L1465.4,1164.2 L1464,1174 L1454.2,1186.6 L1444.4,1197.8 L1438.8,1202 L1429,1200.6 L1433.2,1209.8 L1423.4,1215.4 L1412.2,1216.8 L1410.8,1221 L1400.9,1225.2 L1400.9,1233.6 L1391.1,1244.9 L1396.7,1250.5 L1389.7,1257.5 L1384.1,1265.9 L1389.7,1274.3 L1399.5,1279.9 L1391.1,1284.1 L1381.3,1281.3 L1370.1,1275.7 L1360.3,1267.3 L1358.9,1253.3 L1361.7,1239.3 L1367.3,1228 L1365.9,1208.4 L1370.1,1203.4 L1375,1178.2 L1378.5,1157.2 L1379.9,1136.8 L1361.7,1124.9 L1356.1,1120.7 L1346,1099.8 L1338.2,1090 L1336.6,1083 L1341.1,1078.9 L1339.4,1074.4 L1340.3,1067.9 L1341.9,1062.2 L1347.2,1057.3 L1350.9,1054.8 Z"/><path d="M1013,1394 L1013.7,1392.3 L1028.7,1392.3 L1056.7,1388.6 L1056.7,1382.1 L1079.2,1378.3 L1036.2,1370.8 L1036.2,1367.1 L1066.1,1367.1 L1088.5,1361.5 L1103.5,1359.6 L1140.8,1357.8 L1197,1355.9 L1225,1359.6 L1268,1359.6 L1253,1350.3 L1281,1350.3 L1309,1351.2 L1330,1353.1 L1340,1350.5 L1354,1353.3 L1368,1352.6 L1382,1351.2 L1391.9,1348.4 L1393.3,1346.3 L1389,1340.6 L1386.3,1337.1 L1391.9,1335 L1393.3,1330.8 L1396.1,1328 L1401,1323.1 L1406.6,1319.6 L1412.2,1317.5 L1424.1,1314 L1438.1,1311.9 L1431.1,1315.4 L1414.3,1320.3 L1410.1,1322.4 L1398.9,1328 L1398.9,1332.2 L1405.9,1333.6 L1410.1,1336.4 L1417.1,1342 L1417.1,1349.1 L1414.3,1354.7 L1407.3,1358.9 L1396.1,1361.7 L1379.2,1364.5 L1368,1364.1 L1351.9,1364.5 L1350.5,1375.7 L1357.5,1377.1 L1359.6,1381.3 L1369.4,1382 L1379.2,1380.6 L1389,1382.7 L1405,1384.5 L1414,1387 L1414.3,1391.1 L1431.1,1389 L1445.1,1386.2 L1460,1384.8 L1472.2,1385.8 L1473.6,1388.5 L1485.7,1386.4 L1493.7,1382.4 L1509.9,1382.4 L1534,1379.7 L1565,1377.7 L1534,1375.7 L1511.2,1375 L1515.2,1369 L1534,1364.3 L1554.2,1361.6 L1581.1,1360.2 L1585.1,1355.5 L1597.2,1354.9 L1591.8,1351.5 L1610.6,1347.5 L1614.7,1343.5 L1630.8,1343.5 L1641.5,1342.8 L1662,1343.5 L1662,1394 Z"/><path d="M1442.7,1381.1 L1457.5,1377 L1461.5,1370.3 L1470.9,1369.7 L1483,1371 L1486.4,1376.4 L1480.3,1378.4 Z"/><path d="M1375,1375.7 L1392.6,1371.5 L1420.6,1377.1 L1421.3,1381.3 L1396.1,1379.9 Z"/><path d="M1369.4,1336.4 L1379.2,1334.3 L1385.5,1340.6 L1386.3,1347.7 L1373.6,1349.1 L1361,1346.3 L1366,1343 L1360,1340 Z"/><path d="M1351.9,1364.5 L1370.1,1369 L1354,1370.1 Z"/><path d="M1013.5,1373.6 L1024,1373 L1032.4,1375.5 L1024,1377.4 L1013.5,1377 Z"/><ellipse cx="1420.6" cy="1268" rx="5.5" ry="2.2"/></g><g fill="none" stroke="#8c8878" stroke-width="1.35" stroke-linejoin="round"><path d="M1350.9,1063 L1359,1065.4 L1367.2,1070.3 L1370.5,1075.3 L1375.4,1073.6 L1380,1075.3 L1382.7,1073 L1381,1058 L1389,1057 L1390,1049"/><path d="M1353.3,1075.7 L1346.4,1083.8 L1341.1,1078.9"/><path d="M1380,1081 L1371.3,1083.8 L1367.2,1092 L1365.2,1098.1 L1370,1102.5 L1378.5,1106.7 L1384.1,1109.5 L1398.1,1105.3 L1400.9,1113.7 L1417.8,1120.7 L1420.6,1129.1 L1427.6,1131.9 L1429,1140.3 L1427.6,1150.1 L1434.6,1151.5 L1440.2,1155.8 L1441.6,1164.2 L1444.4,1167 L1438,1175 L1431.8,1181 L1429,1190 L1430,1200.6"/><path d="M1380,1075.3 L1380,1081"/><path d="M1398,1061.8 L1404,1056 L1405,1049"/><path d="M1420,1049 L1421,1058 L1425,1060 L1432,1056 L1436,1049"/><path d="M1442,1049 L1444,1056 L1451,1049"/><path d="M1384.1,1109.5 L1385.5,1117.9 L1384.1,1126.3 L1382.7,1136.1 L1389.7,1154.4 L1386.9,1164.2 L1384.1,1171.2 L1379.9,1185.2 L1378.5,1199.2 L1377.8,1209.8 L1375.7,1228 L1372.9,1242 L1368.7,1256 L1367.3,1264.5 L1371.5,1268.7 L1384.1,1268.7 L1385.5,1275.7"/><path d="M1389.7,1154.4 L1395.3,1151.5 L1403,1152 L1409.4,1151.5 L1410.8,1143.1 L1419.2,1141 L1427,1141.5"/><path d="M1409.4,1151.5 L1419.2,1157.2 L1429,1164.2 L1426.2,1171.2 L1434.6,1171.2 L1441.6,1164.2"/><path d="M1431.8,1183.8 L1445.8,1192.2"/><path d="M1036,1370 L1079,1378"/><path d="M1018,1383 L1042,1383"/><path d="M1014,1389 L1030,1389"/><path d="M1046,1387 L1064,1387"/></g><g fill="#8c8878"><circle cx="1039.3" cy="1058.1" r="1.3"/><circle cx="1031.9" cy="1050.6" r="0.8"/><circle cx="1028.7" cy="1067" r="0.7"/><circle cx="1048.7" cy="1081.4" r="0.8"/><circle cx="1045.5" cy="1087.6" r="0.8"/><circle cx="1037.1" cy="1100.5" r="0.9"/><circle cx="1025" cy="1105.2" r="0.8"/><circle cx="1061" cy="1110.4" r="0.8"/><circle cx="1107.2" cy="1101.1" r="1.1"/><circle cx="1110.9" cy="1103.9" r="1.2"/><circle cx="1104.8" cy="1097" r="0.8"/><circle cx="1030" cy="1139.4" r="0.8"/><circle cx="1038" cy="1143.7" r="1.1"/><circle cx="1030" cy="1148.4" r="0.8"/><circle cx="1037.1" cy="1151.2" r="0.8"/><circle cx="1062.9" cy="1153.4" r="0.8"/><circle cx="1070.2" cy="1157.1" r="0.8"/><circle cx="1077.3" cy="1159" r="0.7"/><circle cx="1090.4" cy="1173.4" r="0.8"/><circle cx="1146.1" cy="1163.3" r="0.8"/><circle cx="1153" cy="1160.9" r="0.9"/><circle cx="1226.8" cy="1171.7" r="1"/><circle cx="1073.6" cy="1124" r="0.8"/><circle cx="1076" cy="1121" r="0.7"/><circle cx="1082" cy="1122" r="1"/><circle cx="1085" cy="1126" r="1.1"/><circle cx="1088" cy="1122" r="1.2"/><circle cx="1092" cy="1130" r="1.2"/><circle cx="1096" cy="1131" r="0.9"/><circle cx="1100" cy="1129" r="0.8"/><circle cx="1087" cy="1133" r="0.8"/><circle cx="1094" cy="1134" r="0.8"/><circle cx="1102" cy="1134" r="0.8"/><circle cx="1103" cy="1139" r="0.8"/><circle cx="1104" cy="1136" r="1.1"/><circle cx="1112" cy="1138" r="0.8"/><circle cx="1119" cy="1137.5" r="0.9"/><circle cx="1121" cy="1138" r="0.8"/><circle cx="1102" cy="1144" r="0.9"/><circle cx="1106" cy="1142" r="0.8"/><circle cx="1113" cy="1141" r="0.8"/><circle cx="1105" cy="1151" r="0.8"/><circle cx="1113" cy="1147" r="1"/><circle cx="1121" cy="1149" r="1"/><circle cx="1127" cy="1156" r="0.8"/><circle cx="1112" cy="1151" r="0.7"/><circle cx="1051" cy="1130" r="0.8"/><circle cx="1060" cy="1130" r="1"/><circle cx="1064" cy="1131" r="0.9"/><circle cx="1070" cy="1134" r="1.4"/><circle cx="1296" cy="1066" r="1.2"/><circle cx="1300" cy="1067" r="1.6"/><circle cx="1303" cy="1069" r="1.2"/><circle cx="1298" cy="1063" r="0.8"/><circle cx="1305" cy="1064" r="0.8"/><circle cx="1539.6" cy="1062.2" r="0.7"/><circle cx="1527.8" cy="1080.6" r="0.7"/><circle cx="1598.4" cy="1096.7" r="0.8"/><circle cx="1632.2" cy="1127.9" r="0.9"/><circle cx="1539.8" cy="1146" r="0.6"/><circle cx="1606.6" cy="1210.8" r="0.8"/><circle cx="1615.7" cy="1223.3" r="0.8"/><circle cx="1490" cy="1274" r="0.8"/><circle cx="1500" cy="1276" r="1.3"/><circle cx="1505" cy="1277" r="1.2"/><circle cx="1480" cy="1272.5" r="0.7"/><circle cx="1519" cy="1280" r="0.8"/><circle cx="1546" cy="1286" r="0.7"/><circle cx="1549" cy="1288" r="0.7"/><circle cx="1551" cy="1291" r="0.7"/><circle cx="1551.5" cy="1294" r="0.7"/><circle cx="1548" cy="1297" r="0.8"/><circle cx="1477.7" cy="1302.6" r="1.2"/><circle cx="1472" cy="1303" r="0.8"/><circle cx="1475" cy="1304.5" r="1"/><circle cx="1389" cy="1317" r="0.8"/><circle cx="1387" cy="1311" r="0.8"/><circle cx="1430" cy="1305" r="0.8"/><circle cx="1441" cy="1305" r="0.9"/><circle cx="1300" cy="1334.4" r="0.8"/></g><g fill="none" stroke="#8c8878" stroke-linejoin="round" stroke-linecap="round"><path d="M1367,1229 L1364,1234 L1362,1240 L1360,1247 L1359,1254 L1359.5,1261 L1361,1267 L1365,1272 L1371,1276 L1378,1280 L1385,1282.5 L1391,1284" stroke-width="3" stroke-dasharray="2.2,0.8"/><path d="M1364,1238 L1367,1236 M1361,1246 L1365,1245 M1360,1256 L1364,1257 M1362,1266 L1367,1265 M1370,1272 L1374,1276 M1380,1277 L1383,1280" stroke-width="1.6"/><path d="M1414,1311 L1422,1309 L1432,1306 L1440,1305.5 M1407,1316 L1412,1313" stroke-width="1.8" stroke-dasharray="2,1"/><path d="M1416,1312.5 L1430,1314" stroke-width="2.2"/></g><path d="M1326,1061.6 L1350,1061.6 L1354,1065.6 L1354,1378.3 L1350,1382.3 L1326,1382.3 L1322,1378.3 L1322,1065.6 Z" fill="rgba(255,40,40,0.3)"/><rect x="1327.9" y="1067.8" width="19.9" height="312.5" fill="none" stroke="rgba(255,40,40,0.32)" stroke-width="3.8"/><rect x="1335.1" y="1067.7" width="24.4" height="5.9" fill="#b652d6"/><rect x="1344.1" y="1058.3" width="6.2" height="24.3" fill="#b652d6"/></g></svg>

</body></html>
